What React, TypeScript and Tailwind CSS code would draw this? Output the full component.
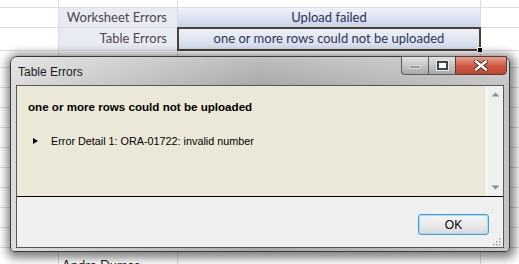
import React from 'react';

const sheetRows = 14;

const Cell = ({ className = '', children }: { className?: string; children?: React.ReactNode }) => (
  <div className={`border-r border-b border-[#dadcdd] flex items-center overflow-hidden whitespace-nowrap ${className}`}>
    {children}
  </div>
);

const Sheet = () => (
  <div className="flex flex-col font-['Lato',sans-serif] text-[13px]">
    <div className="grid grid-cols-[59px_119px_303px_1fr] h-[8px]">
      <Cell />
      <Cell />
      <Cell />
      <Cell className="border-r-0" />
    </div>
    <div className="grid grid-cols-[59px_119px_303px_1fr] h-[20px]">
      <Cell />
      <Cell className="bg-[#e9ebf4] justify-end pr-[10px] text-[#4a4650]">Worksheet Errors</Cell>
      <Cell className="bg-gradient-to-b from-[#f1f3f9] to-[#c9d3e8] justify-center text-[#2f3552]">Upload failed</Cell>
      <Cell className="border-r-0" />
    </div>
    <div className="grid grid-cols-[59px_119px_303px_1fr] h-[20px]">
      <Cell />
      <Cell className="bg-[#e9ebf4] justify-end pr-[10px] text-[#4a4650]">Table Errors</Cell>
      <div className="relative -mt-[1px] -ml-[1px] border-2 border-[#4a4232] bg-gradient-to-b from-[#eef1f8] to-[#d3dbec] flex items-center justify-center text-[#2f3552] whitespace-nowrap">
        one or more rows could not be uploaded
        <span className="absolute -right-[4px] -bottom-[4px] w-[6px] h-[6px] bg-black border border-white" />
      </div>
      <Cell className="border-r-0" />
    </div>
    {Array.from({ length: sheetRows - 3 }).map((_, i) => (
      <div key={i} className="grid grid-cols-[59px_119px_303px_1fr] h-[20px]">
        <Cell />
        <Cell className={`pl-[3px] text-[#1f1f1f] ${i === 10 ? 'items-start pt-[8px]' : ''}`}>{i === 10 ? 'Andre Dumas' : ''}</Cell>
        <Cell />
        <Cell className="border-r-0" />
      </div>
    ))}
  </div>
);

const CaptionButtons = () => (
  <div className="flex self-start h-[19px] -mt-[1px]">
    <div className="w-[27px] border border-[#5c5c5c] border-r-0 rounded-bl-[4px] bg-gradient-to-b from-[#e2e2e2] to-[#a9a9a9] flex items-center justify-center">
      <span className="w-[12px] h-[4px] mt-[2px] bg-[#9c9c9c] border border-[#d8d8d8]" />
    </div>
    <div className="w-[27px] border border-[#5c5c5c] border-r-0 bg-gradient-to-b from-[#e2e2e2] to-[#a9a9a9] flex items-center justify-center">
      <span className="w-[11px] h-[9px] border-2 border-[#3e4450] bg-white outline outline-1 outline-[#e8e8e8]" />
    </div>
    <div className="w-[52px] border border-[#5c3a34] rounded-br-[4px] bg-gradient-to-b from-[#e4a090] via-[#cf5a46] to-[#bd4630] flex items-center justify-center">
      <svg width="14" height="11" viewBox="0 0 14 11">
        <path d="M2 1.5 L12 9.5 M12 1.5 L2 9.5" stroke="#3a2a28" strokeWidth="4.2" strokeLinecap="square" />
        <path d="M2 1.5 L12 9.5 M12 1.5 L2 9.5" stroke="#ffffff" strokeWidth="2.4" strokeLinecap="square" />
      </svg>
    </div>
  </div>
);

const ScrollArrow = ({ up }: { up?: boolean }) => (
  <svg width="9" height="5" viewBox="0 0 9 5">
    <path d={up ? 'M0.5 4.5 L4.5 0.5 L8.5 4.5 Z' : 'M0.5 0.5 L4.5 4.5 L8.5 0.5 Z'} fill="#8e8e8e" />
  </svg>
);

const Dialog = () => (
  <div className="absolute left-[10px] top-[56px] w-[500px] h-[196px] flex flex-col border border-[#3a3a3a] rounded-t-[7px] rounded-b-[4px] bg-gradient-to-r from-[#dcdcdc] via-[#a9a9a9] to-[#c6c6c6] shadow-[1px_2px_10px_4px_rgba(0,0,0,0.5)] font-['Liberation_Sans',Arial,sans-serif]">
    <div className="h-[28px] flex items-center justify-between pl-[7px] pr-[2px] rounded-t-[6px] bg-gradient-to-b from-white/25 to-transparent">
      <span className="text-[12px] text-[#1a1a1a] mt-[1px]">Table Errors</span>
      <CaptionButtons />
    </div>
    <div className="flex-1 px-[5px] pb-[3px] flex flex-col">
      <div className="flex-1 border border-[#575757] flex flex-col">
        <div className="flex-1 flex border-b border-black bg-[#ebe8d8]">
          <div className="flex-1 pl-[11px] pt-[14px] flex flex-col">
            <div className="text-[11.6px] font-bold leading-[14px] text-black">one or more rows could not be uploaded</div>
            <div className="flex items-center mt-[20px] pl-[5px] gap-[13px]">
              <svg width="5" height="6" viewBox="0 0 5 6">
                <path d="M0 0 L5 3 L0 6 Z" fill="#000" />
              </svg>
              <span className="text-[10.8px] leading-[14px] text-black">Error Detail 1: ORA-01722: invalid number</span>
            </div>
          </div>
          <div className="w-[17px] bg-[#f0f0f0] border-l border-white flex flex-col items-center justify-between py-[6px]">
            <ScrollArrow up />
            <ScrollArrow />
          </div>
        </div>
        <div className="h-[50px] bg-[#f0f0f0] flex justify-end pt-[17px] pr-[14px] relative">
          <button className="w-[71px] h-[21px] rounded-[3px] border border-[#3c9fdc] bg-gradient-to-b from-[#f4f4f4] via-[#ebebeb] to-[#d8d8d8] shadow-[inset_0_0_0_1px_#a8dcf6] text-[12px] text-black flex items-center justify-center">
            OK
          </button>
          <svg className="absolute right-[2px] bottom-[1px]" width="8" height="8" viewBox="0 0 8 8">
            <rect x="6" y="0" width="1.5" height="1.5" fill="#a0a0a0" />
            <rect x="3" y="3" width="1.5" height="1.5" fill="#a0a0a0" />
            <rect x="6" y="3" width="1.5" height="1.5" fill="#a0a0a0" />
            <rect x="0" y="6" width="1.5" height="1.5" fill="#a0a0a0" />
            <rect x="3" y="6" width="1.5" height="1.5" fill="#a0a0a0" />
            <rect x="6" y="6" width="1.5" height="1.5" fill="#a0a0a0" />
          </svg>
        </div>
      </div>
    </div>
  </div>
);

export default function App() {
  return (
    <div className="relative w-[519px] h-[264px] overflow-hidden bg-white">
      <Sheet />
      <Dialog />
    </div>
  );
}
